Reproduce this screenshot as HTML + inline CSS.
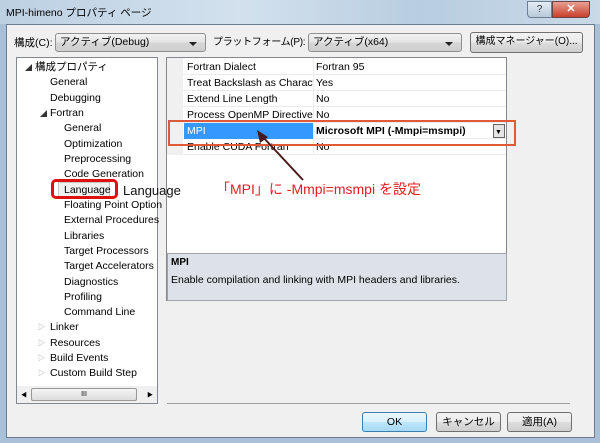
<!DOCTYPE html>
<html><head><meta charset="utf-8"><style>
*{margin:0;padding:0;box-sizing:border-box}
body{width:600px;height:443px;overflow:hidden;position:relative;background:#a9c0d6;font-family:"Liberation Sans","Noto Sans CJK JP",sans-serif;font-size:11px;color:#000}
.a{position:absolute}
.t{position:absolute;white-space:nowrap;font-size:10.5px;line-height:12px}
.btn{position:absolute;border:1px solid #707070;border-radius:3px;background:linear-gradient(#f2f2f2,#ebebeb 50%,#dddddd 51%,#cfcfcf);text-align:center;font-size:10.5px;line-height:18px;white-space:nowrap;overflow:hidden}
.combo{position:absolute;border:1px solid #8e8f8f;border-radius:3px;background:linear-gradient(#f2f2f2,#e4e4e4 50%,#d6d6d6 51%,#cfcfcf);font-size:10.5px;line-height:17px;padding-left:4px;white-space:nowrap}
.combo:after{content:"";position:absolute;right:8px;top:8px;border:4px solid transparent;border-top:4px solid #222;border-bottom:0}
.lab{overflow:hidden;width:126px}
</style></head><body>
<div class="a" style="left:0;top:0;width:600px;height:24px;background:linear-gradient(90deg,#bcd0e2,#d3e1ee 40%,#b8cde0 70%,#c9d9e8)"></div>
<div class="t" style="left:6px;top:7px;font-size:10.5px">MPI-himeno プロパティ ページ</div>
<div class="a" style="left:527px;top:1px;width:25px;height:17px;border:1px solid #6d7f92;border-radius:0 0 0 4px;background:linear-gradient(#e4edf5,#b8c9da);font-size:10px;line-height:15px;text-align:center;color:#333">?</div>
<div class="a" style="left:552px;top:1px;width:38px;height:17px;border:1px solid #6d4444;border-radius:0 0 4px 0;background:linear-gradient(#e8a090,#c8402c);font-size:11px;line-height:15px;text-align:center;color:#fff;font-weight:bold">✕</div>
<div class="a" style="left:6px;top:24px;width:589px;height:414px;background:#f0f0f0;border:1px solid #6a7d90"></div>
<div class="t" style="left:14px;top:37px">構成(C):</div>
<div class="combo" style="left:55px;top:33px;width:151px;height:19px">アクティブ(Debug)</div>
<div class="t" style="left:213px;top:37px;font-size:10px;letter-spacing:-0.3px">プラットフォーム(P):</div>
<div class="combo" style="left:308px;top:33px;width:154px;height:19px">アクティブ(x64)</div>
<div class="btn" style="left:470px;top:32px;width:113px;height:21px;font-size:10px">構成マネージャー(O)...</div>

<div class="a" style="left:16px;top:57px;width:142px;height:347px;background:#fff;border:1px solid #828790"></div>
<div class="t" style="left:25px;top:63px;font-size:7px;color:#333">◢</div>
<div class="t" style="left:35px;top:61px">構成プロパティ</div>
<div class="t" style="left:50px;top:76px">General</div>
<div class="t" style="left:50px;top:92px">Debugging</div>
<div class="t" style="left:40px;top:109px;font-size:7px;color:#333">◢</div>
<div class="t" style="left:50px;top:107px">Fortran</div>
<div class="t" style="left:64px;top:122px">General</div>
<div class="t" style="left:64px;top:138px">Optimization</div>
<div class="t" style="left:64px;top:153px">Preprocessing</div>
<div class="t" style="left:64px;top:168px">Code Generation</div>
<div class="a" style="left:58px;top:182px;width:52px;height:15px;background:#f0f0f0;border:1px solid #c8c8c8"></div>
<div class="t" style="left:64px;top:184px">Language</div>
<div class="t" style="left:64px;top:199px">Floating Point Option</div>
<div class="t" style="left:64px;top:214px">External Procedures</div>
<div class="t" style="left:64px;top:230px">Libraries</div>
<div class="t" style="left:64px;top:245px">Target Processors</div>
<div class="t" style="left:64px;top:260px">Target Accelerators</div>
<div class="t" style="left:64px;top:276px">Diagnostics</div>
<div class="t" style="left:64px;top:291px">Profiling</div>
<div class="t" style="left:64px;top:306px">Command Line</div>
<div class="t" style="left:38px;top:322px;font-size:7px;color:#999">▷</div><div class="t" style="left:50px;top:321px">Linker</div>
<div class="t" style="left:38px;top:338px;font-size:7px;color:#999">▷</div><div class="t" style="left:50px;top:337px">Resources</div>
<div class="t" style="left:38px;top:353px;font-size:7px;color:#999">▷</div><div class="t" style="left:50px;top:352px">Build Events</div>
<div class="t" style="left:38px;top:368px;font-size:7px;color:#999">▷</div><div class="t" style="left:50px;top:367px">Custom Build Step</div>
<div class="a" style="left:17px;top:386px;width:140px;height:17px;background:#f0f0f0"></div>
<div class="a" style="left:31px;top:388px;width:106px;height:13px;border:1px solid #999;border-radius:2px;background:linear-gradient(#f4f4f4,#dcdcdc);font-size:7px;text-align:center;line-height:11px">III</div>
<div class="t" style="left:21px;top:390px;font-size:6px">◀</div><div class="t" style="left:147px;top:390px;font-size:6px">▶</div>

<div class="a" style="left:166px;top:57px;width:341px;height:244px;background:#fff;border:1px solid #828790"></div>
<div class="a" style="left:167px;top:58px;width:16px;height:97px;background:#f0f0f0"></div>
<div class="a" style="left:183px;top:74px;width:323px;height:1px;background:#ececec;box-shadow:0 16px #ececec,0 32px #ececec,0 48px #ececec,0 64px #ececec,0 80px #ececec"></div>
<div class="a" style="left:313px;top:58px;width:1px;height:96px;background:#ececec"></div>
<div class="t lab" style="left:187px;top:61px">Fortran Dialect</div><div class="t" style="left:316px;top:61px">Fortran 95</div>
<div class="t lab" style="left:187px;top:77px">Treat Backslash as Characte</div><div class="t" style="left:316px;top:77px">Yes</div>
<div class="t lab" style="left:187px;top:93px">Extend Line Length</div><div class="t" style="left:316px;top:93px">No</div>
<div class="t lab" style="left:187px;top:109px">Process OpenMP Directives</div><div class="t" style="left:316px;top:109px">No</div>
<div class="a" style="left:184px;top:123px;width:129px;height:16px;background:#3399ff"></div>
<div class="t" style="left:187px;top:125px;color:#fff">MPI</div>
<div class="t" style="left:316px;top:125px;font-weight:bold">Microsoft MPI (-Mmpi=msmpi)</div>
<div class="a" style="left:493px;top:124px;width:12px;height:14px;border:1px solid #666;background:#e4e4e4"></div>
<div class="t" style="left:495px;top:127px;font-size:7px">▼</div>
<div class="t lab" style="left:187px;top:141px">Enable CUDA Fortran</div><div class="t" style="left:316px;top:141px">No</div>
<div class="a" style="left:167px;top:253px;width:340px;height:48px;background:#dde1e8;border:1px solid #a0a4aa"></div>
<div class="t" style="left:171px;top:257px;font-weight:bold;font-size:10px">MPI</div>
<div class="t" style="left:171px;top:274px">Enable compilation and linking with MPI headers and libraries.</div>

<div class="a" style="left:168px;top:120px;width:348px;height:26px;border:2px solid #e05a3a"></div>
<div class="a" style="left:51px;top:179px;width:67px;height:20px;border:3px solid #e01010;border-radius:5px"></div>
<div class="t" style="left:123px;top:183px;font-size:13px;line-height:15px;color:#111">Language</div>
<svg class="a" style="left:0;top:0" width="600" height="443"><line x1="303" y1="180" x2="262" y2="136" stroke="#4a1a1a" stroke-width="2"/><polygon points="257,130 268,137 260,143" fill="#4a1a1a"/></svg>
<div class="t" style="left:216px;top:181px;font-size:14px;line-height:16px;color:#e02020">「MPI」に -Mmpi=msmpi を設定</div>

<div class="a" style="left:167px;top:403px;width:403px;height:1px;background:#a0a0a0"></div>
<div class="btn" style="left:362px;top:412px;width:65px;height:20px;border-color:#3c7fb1;background:linear-gradient(#eaf6fd,#d9f0fc 50%,#bee6fd 51%,#a7d9f5)">OK</div>
<div class="btn" style="left:436px;top:412px;width:65px;height:20px">キャンセル</div>
<div class="btn" style="left:507px;top:412px;width:65px;height:20px">適用(A)</div>
</body></html>
